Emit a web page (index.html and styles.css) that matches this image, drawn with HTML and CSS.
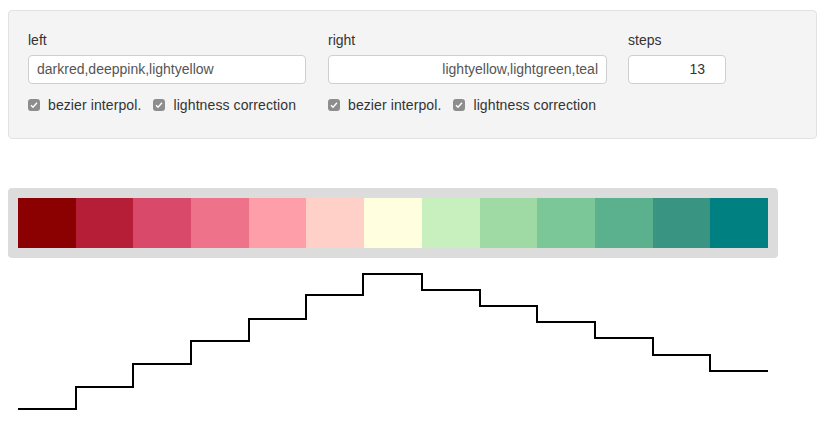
FILE: index.html
```html
<!DOCTYPE html>
<html>
<head>
<meta charset="utf-8">
<link rel="stylesheet" href="styles.css">
</head>
<body>
<div class="page">
  <div class="well">
    <div class="col col-left">
      <div class="label">left</div>
      <div class="input">darkred,deeppink,lightyellow</div>
      <div class="checks">
        <span class="cb"><svg viewBox="0 0 12 12" width="12" height="12"><path d="M3 6.2 L5 8.2 L9 3.8" fill="none" stroke="#fff" stroke-width="1.4"/></svg></span>
        <span class="cbl">bezier interpol.</span>
        <span class="cb"><svg viewBox="0 0 12 12" width="12" height="12"><path d="M3 6.2 L5 8.2 L9 3.8" fill="none" stroke="#fff" stroke-width="1.4"/></svg></span>
        <span class="cbl">lightness correction</span>
      </div>
    </div>
    <div class="col col-right">
      <div class="label">right</div>
      <div class="input input-right">lightyellow,lightgreen,teal</div>
      <div class="checks">
        <span class="cb"><svg viewBox="0 0 12 12" width="12" height="12"><path d="M3 6.2 L5 8.2 L9 3.8" fill="none" stroke="#fff" stroke-width="1.4"/></svg></span>
        <span class="cbl">bezier interpol.</span>
        <span class="cb"><svg viewBox="0 0 12 12" width="12" height="12"><path d="M3 6.2 L5 8.2 L9 3.8" fill="none" stroke="#fff" stroke-width="1.4"/></svg></span>
        <span class="cbl">lightness correction</span>
      </div>
    </div>
    <div class="col col-steps">
      <div class="label">steps</div>
      <div class="input input-steps">13</div>
    </div>
  </div>

  <div class="scale">
    <div class="sw" style="background:#8b0000"></div>
    <div class="sw" style="background:#b61e38"></div>
    <div class="sw" style="background:#d8496a"></div>
    <div class="sw" style="background:#ef728b"></div>
    <div class="sw" style="background:#fd9ea9"></div>
    <div class="sw" style="background:#ffd0c8"></div>
    <div class="sw" style="background:#ffffe0"></div>
    <div class="sw" style="background:#c8efbe"></div>
    <div class="sw" style="background:#9fd9a3"></div>
    <div class="sw" style="background:#7bc797"></div>
    <div class="sw" style="background:#5bb08d"></div>
    <div class="sw" style="background:#399582"></div>
    <div class="sw" style="background:#008080"></div>
  </div>

  <svg class="chart" width="810" height="160" viewBox="0 0 810 160">
    <path d="M10 148 H68 V126 H125 V103 H183 V80 H241 V58 H298 V34 H355 V13 H414 V29 H472 V45 H529 V61 H587 V77 H645 V94 H702 V110 H760" fill="none" stroke="#000" stroke-width="2"/>
  </svg>
</div>
</body>
</html>
```

FILE: styles.css
```css
html, body {
  margin: 0;
  padding: 0;
  background: #fff;
}
body {
  font-family: "Liberation Sans", Arial, sans-serif;
  font-size: 14px;
  color: #333;
}
.page {
  padding: 10px 0 0 8px;
}
.well {
  width: 769px;
  height: 89px;
  background: #f4f4f4;
  border: 1px solid #e2e2e2;
  border-radius: 4px;
  padding: 19px 19px 19px 19px;
  display: flex;
}
.col {
  display: flex;
  flex-direction: column;
}
.col-left, .col-right {
  width: 300px;
}
.label {
  height: 20px;
  line-height: 20px;
  margin-bottom: 5px;
}
.input {
  box-sizing: border-box;
  height: 29px;
  line-height: 27px;
  border: 1px solid #cfcfcf;
  border-radius: 4px;
  background: #fff;
  padding: 0 8px;
  color: #555;
  width: 278px;
}
.input-right {
  width: 279px;
  text-align: right;
}
.input-steps {
  width: 98px;
  text-align: right;
  padding-right: 20px;
  color: #333;
}
.checks {
  display: flex;
  align-items: center;
  margin-top: 11px;
  height: 20px;
  letter-spacing: 0.1px;
}
.cb {
  width: 12px;
  height: 12px;
  border-radius: 3px;
  background: #8d8d8d;
  display: inline-flex;
  margin-right: 8px;
}
.cb svg { display: block; }
.cbl {
  margin-right: 12px;
}
.scale {
  margin-top: 49px;
  width: 750px;
  padding: 10px;
  background: #dcdcdc;
  border-radius: 4px;
  display: flex;
}
.sw {
  flex: 1;
  height: 50px;
}
.chart {
  display: block;
  margin-top: 3px;
}
```
